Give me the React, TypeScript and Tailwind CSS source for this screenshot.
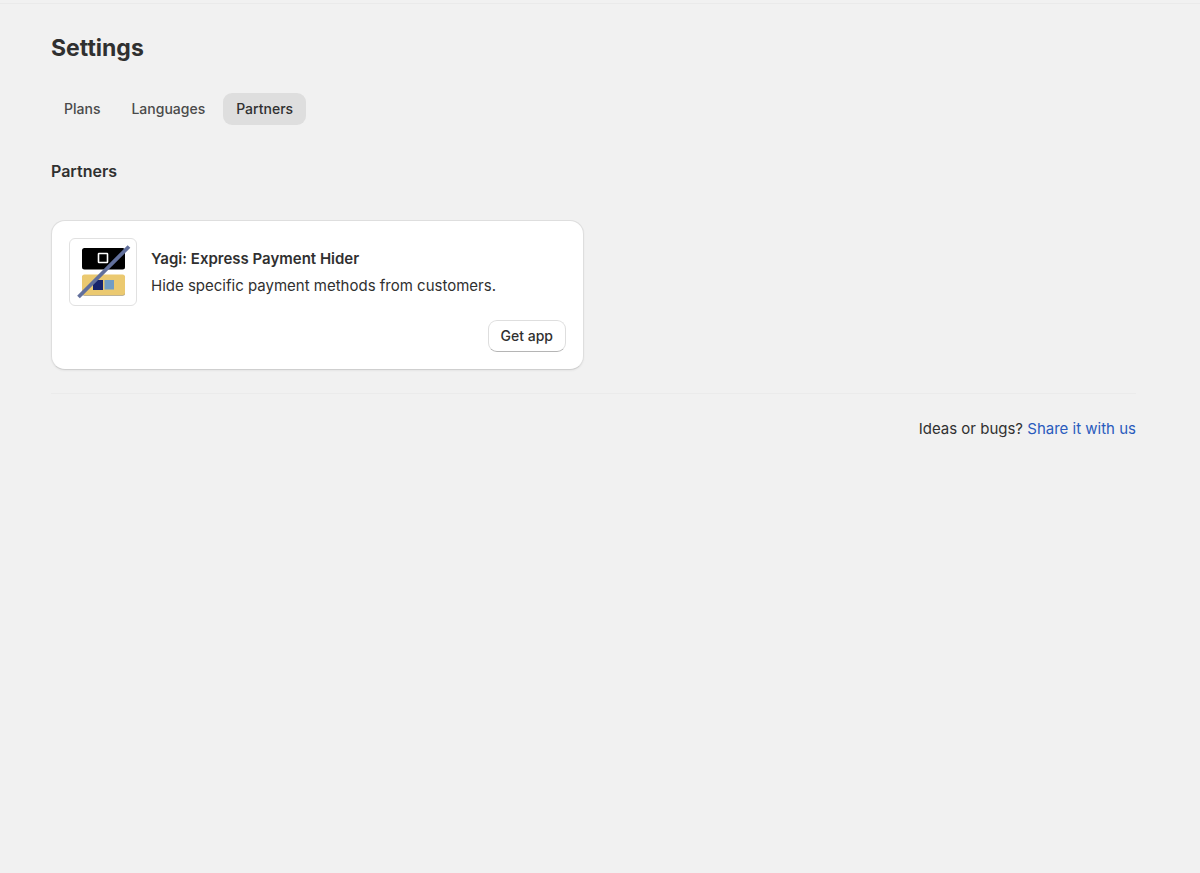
const tabs = ["Plans", "Languages", "Partners"];

function YagiLogo() {
  return (
    <svg viewBox="0 0 66 66" className="size-full" role="img" aria-label="Yagi">
      <rect x="12" y="9" width="43" height="21.500" rx="2.500" fill="#000" />
      <rect x="28.500" y="14.500" width="9" height="9" rx="0.500" fill="none" stroke="#fff" strokeWidth="1.600" />
      <rect x="12" y="36.200" width="43" height="20.500" rx="2.500" fill="#a99a74" />
      <rect x="12" y="35.400" width="43" height="20.500" rx="2.500" fill="#ebc970" />
      <rect x="23" y="41" width="10" height="10" fill="#17236b" />
      <rect x="34.500" y="41" width="9.500" height="9.500" fill="#719dc6" />
      <path d="M8.500 58 59 7.500" stroke="#62709c" strokeWidth="3.800" />
    </svg>
  );
}

export default function App() {
  return (
    <div className="min-h-screen bg-[#f1f1f1] pt-[3px] pr-16 pl-[51px] font-['Inter',sans-serif] text-[#303030]">
      <div className="-mr-16 -ml-[51px] border-t border-[#eaeaea]" />
      <h1 className="pt-7 text-[23px] leading-8 font-bold">Settings</h1>
      <nav className="mt-[29px] flex gap-[5px]" aria-label="Settings sections">
        {tabs.map((tab) => (
          <button
            key={tab}
            type="button"
            aria-current={tab === "Partners" ? "page" : undefined}
            className={
              tab === "Partners"
                ? "h-8 rounded-[9px] bg-[#dedede] px-[13px] text-sm font-medium"
                : "h-8 rounded-[9px] px-[13px] text-sm font-medium text-[#4a4a4a]"
            }
          >
            {tab}
          </button>
        ))}
      </nav>
      <main>
        <h2 className="mt-[34px] text-base leading-6 font-semibold">Partners</h2>
        <div className="mt-[37px] grid grid-cols-2 gap-[19px]">
          <section className="flex flex-col rounded-[14px] border border-[#dedede] border-b-[#cfcfcf] bg-white p-[17px] shadow-xs">
            <div className="flex items-center gap-[14px]">
              <div className="size-[68px] shrink-0 rounded-md border border-[#e1e1e1]">
                <YagiLogo />
              </div>
              <div>
                <h3 className="text-[15px] leading-6 font-semibold">Yagi: Express Payment Hider</h3>
                <p className="mt-[3px] text-[15px] leading-6">Hide specific payment methods from customers.</p>
              </div>
            </div>
            <button
              type="button"
              className="mt-[14px] h-8 self-end rounded-[9px] border border-[#dedede] border-b-[#b5b5b5] bg-white px-3 text-sm font-medium"
            >
              Get app
            </button>
          </section>
        </div>
      </main>
      <footer className="mt-[23px] border-t border-[#ebebeb] pt-[23px] text-right text-[15px] leading-6">
        Ideas or bugs?{" "}
        <a href="#share" className="text-[#2a5bbd]">
          Share it with us
        </a>
      </footer>
    </div>
  );
}
